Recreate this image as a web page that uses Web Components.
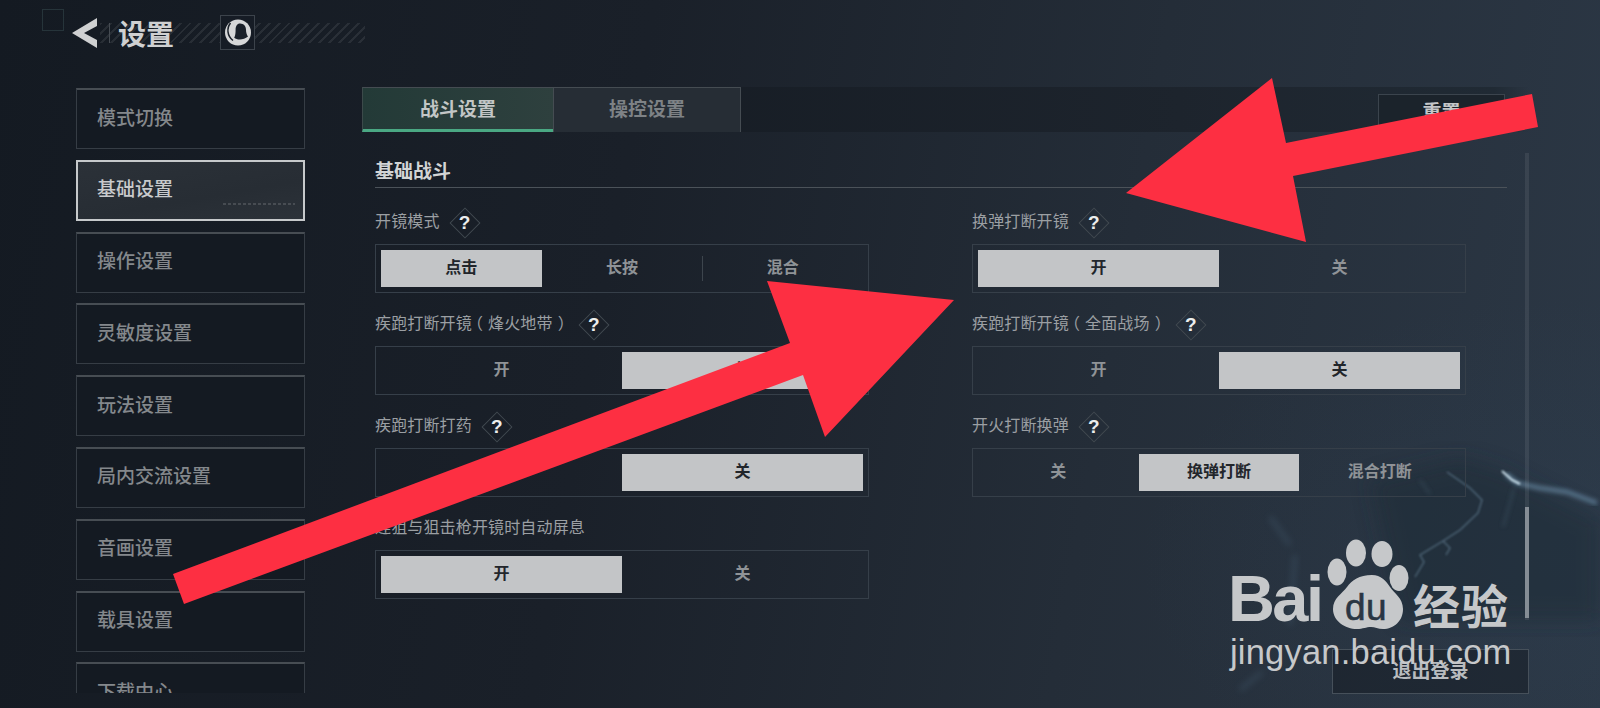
<!DOCTYPE html>
<html lang="zh">
<head>
<meta charset="utf-8">
<title>设置</title>
<style>
    html, body { margin: 0; padding: 0; background: #161c25; }
</style>
</head>
<body>
<settings-page></settings-page>
<script>
class PageHeader extends HTMLElement {
    constructor() {
        super();
        this.attachShadow({ mode: 'open' }).innerHTML = `
        <style>
            :host { display: flex; align-items: flex-start; height: 87px; padding-left: 42px; box-sizing: border-box; position: relative; }
            .hatch { position: absolute; left: 100px; top: 23px; width: 265px; height: 20px;
                background: repeating-linear-gradient(135deg, rgba(255,255,255,.08) 0 2px, transparent 2px 7px); }
            .corner { width: 22px; height: 22px; margin-top: 9px; box-sizing: border-box; border: 1px solid #26343a; }
            .back { margin: 18px 0 0 8px; position: relative; }
            .sep { width: 1px; height: 20px; margin: 23px 0 0 12px; background: #454b52; position: relative; }
            h1 { margin: 12px 0 0 8px; font: 700 28px/42px "Noto Sans CJK SC", sans-serif; color: #cfd0d1; position: relative; }
            .avatar { width: 35px; height: 35px; margin: 15px 0 0 46px; box-sizing: border-box; border: 1px solid #3c434b; background: #161c25; position: relative; }
            svg { display: block; }
        </style>
        <div class="hatch"></div>
        <div class="corner"></div>
        <svg class="back" width="25" height="30" viewBox="0 0 25 30"><path d="M25 0 L0 15 L25 30 L25 22 L12 15 L25 8Z" fill="#cfd0d1"/></svg>
        <div class="sep"></div>
        <h1>设置</h1>
        <div class="avatar">
            <svg width="33" height="33" viewBox="0 0 33 33">
                <circle cx="17" cy="16.5" r="13" fill="#d6d7d8"/>
                <path d="M19 7.500c3.800 0 6 2.800 6 6.200 0 3 .8 5 2 6.800-2.400 2-5.400 3-8.200 3-2.400 0-4.200-.6-5.600-1.800 1.200-2.400 1.400-5 1.400-8 0-3.600 1.600-6.200 4.400-6.200z" fill="#1a2029"/>
                <path d="M9.500 7c-4 5-3.500 13 2.500 17.500" fill="none" stroke="#1a2029" stroke-width="1.500"/>
            </svg>
        </div>`;
    }
}

class NavItem extends HTMLElement {
    constructor() {
        super();
        this.attachShadow({ mode: 'open' }).innerHTML = `
        <style>
            :host { display: flex; align-items: center; flex: none; height: 61px; box-sizing: border-box; padding: 0 0 6px 20px; position: relative;
                border: 1px solid #363d45; border-top: 2px solid #474d53; background: #141a22;
                font: 500 19px "Noto Sans CJK SC", sans-serif; color: #84888c; }
            :host([active]) { border: 2px solid #c6c9cb; color: #c8cacc; padding-left: 19px;
                background: linear-gradient(170deg, #2b3138, #272d34 60%, #2c3239); }
            :host([active])::after { content: ''; position: absolute; right: 8px; bottom: 14px; width: 72px; height: 2px;
                background: repeating-linear-gradient(90deg, rgba(255,255,255,.14) 0 3px, transparent 3px 5px); }
        </style>
        <slot></slot>`;
    }
}

class SideNav extends HTMLElement {
    constructor() {
        super();
        this.attachShadow({ mode: 'open' }).innerHTML = `
        <style>
            :host { display: flex; flex-direction: column; gap: 10.8px; flex: none; width: 229px; height: 606px; padding-top: 1px; box-sizing: border-box; overflow: hidden; }
        </style>
        <slot></slot>`;
    }
}

class HelpBadge extends HTMLElement {
    constructor() {
        super();
        this.attachShadow({ mode: 'open' }).innerHTML = `
        <style>
            :host { display: inline-flex; align-items: center; justify-content: center; position: relative; width: 30px; height: 30px; margin-left: 10px;
                font: 700 19px "Liberation Sans", sans-serif; color: #eceded; }
            i { position: absolute; inset: 4px; border: 1px solid #414950; transform: rotate(45deg); }
            span { position: relative; }
        </style>
        <i></i><span>?</span>`;
    }
}

class SegControl extends HTMLElement {
    connectedCallback() {
        let options = this.getAttribute('options').split('|');
        let selected = Number(this.getAttribute('selected'));
        let sep = this.getAttribute('sep');
        this.attachShadow({ mode: 'open' }).innerHTML = `
        <style>
            :host { display: flex; height: 49px; box-sizing: border-box; padding: 5px; border: 1px solid #363f49;
                font: 700 16px "Noto Sans CJK SC", sans-serif; color: #8f9397; }
            div { flex: 1; display: flex; align-items: center; justify-content: center; position: relative; padding-bottom: 6px; }
            .on { background: #c3c5c7; color: #22262b; }
            .sep::before { content: ''; position: absolute; left: 0; top: 6px; bottom: 6px; width: 1px; background: #3d454d; }
        </style>
        ${options.map((text, i) => `<div class="${i === selected ? 'on' : ''} ${String(i) === sep ? 'sep' : ''}">${text}</div>`).join('')}`;
    }
}

class SettingRow extends HTMLElement {
    connectedCallback() {
        let label = this.getAttribute('label')
            .replace('（', '<b class="open">（</b>')
            .replace('）', '<b class="close">）</b>');
        this.attachShadow({ mode: 'open' }).innerHTML = `
        <style>
            :host { display: flex; flex-direction: column; gap: 3px; }
            .label { display: flex; align-items: center; height: 36px; font: 400 16px "Noto Sans CJK SC", sans-serif; color: #9b9fa3; }
            .text { margin-bottom: 6px; letter-spacing: .15px; }
            b { font-weight: 400; font-feature-settings: "halt"; display: inline-block; }
            .open { margin: 0 5px 0 3px; }
            .close { margin: 0 3px 0 5px; }
        </style>
        <div class="label"><span class="text">${label}</span><help-badge style="${this.hasAttribute('nohelp') ? 'display:none' : ''}"></help-badge></div>
        <seg-control options="${this.getAttribute('options')}" selected="${this.getAttribute('selected')}" sep="${this.getAttribute('sep') || ''}"></seg-control>`;
    }
}

class SettingTabs extends HTMLElement {
    constructor() {
        super();
        this.attachShadow({ mode: 'open' }).innerHTML = `
        <style>
            :host { display: flex; height: 45px; font: 700 19px "Noto Sans CJK SC", sans-serif;
                background: linear-gradient(90deg, #161c24 20%, #1d242d 70%, #202a34 97%, transparent); }
            .tab { width: 191px; display: flex; align-items: center; justify-content: center; box-sizing: border-box; border-top: 1px solid #454c52; padding-bottom: 6px; }
            .on { background: linear-gradient(90deg, #233a37, #2e403e); color: #c2c6c6; border-bottom: 3px solid #4aa883; padding-bottom: 3px; border-left: 1px solid #3c4a4a; }
            .off { width: 188px; background: #262d35; color: #7e8286; border-right: 1px solid #454c52; border-left: 1px solid #454c52; }
            .reset { margin: 7px 24px 0 auto; width: 127px; height: 38px; display: flex; align-items: center; justify-content: center; box-sizing: border-box; padding-bottom: 6px;
                background: #1b232b; border: 1px solid #3b444d; color: #c4c6c8; }
        </style>
        <div class="tab on">战斗设置</div>
        <div class="tab off">操控设置</div>
        <div class="reset">重置</div>`;
    }
}

class ScrollTrack extends HTMLElement {
    constructor() {
        super();
        this.attachShadow({ mode: 'open' }).innerHTML = `
        <style>
            :host { display: block; flex: none; width: 4px; height: 467px; margin-top: 21px; padding-top: 354px; box-sizing: border-box; background: rgba(255,255,255,.08); }
            div { height: 111px; background: #858d95; }
        </style>
        <div></div>`;
    }
}

class SettingsPanel extends HTMLElement {
    constructor() {
        super();
        this.attachShadow({ mode: 'open' }).innerHTML = `
        <style>
            :host { display: flex; gap: 18px; height: 517px; padding-left: 13px; box-sizing: border-box; }
            .inner { flex: none; width: 1132px; }
            h2 { margin: 26px 0 17px; height: 29px; border-bottom: 1px solid #4b5259; font: 700 19px/24px "Noto Sans CJK SC", sans-serif; color: #d2d4d5; box-sizing: content-box; }
            .grid { display: grid; grid-template-columns: 494px 494px; column-gap: 103px; row-gap: 14px; }
        </style>
        <div class="inner">
            <h2>基础战斗</h2>
            <div class="grid">
                <setting-row label="开镜模式" options="点击|长按|混合" selected="0" sep="2"></setting-row>
                <setting-row label="换弹打断开镜" options="开|关" selected="0"></setting-row>
                <setting-row label="疾跑打断开镜（烽火地带）" options="开|关" selected="1"></setting-row>
                <setting-row label="疾跑打断开镜（全面战场）" options="开|关" selected="1"></setting-row>
                <setting-row label="疾跑打断打药" options="开|关" selected="1"></setting-row>
                <setting-row label="开火打断换弹" options="关|换弹打断|混合打断" selected="1"></setting-row>
                <setting-row label="连狙与狙击枪开镜时自动屏息" nohelp options="开|关" selected="0"></setting-row>
            </div>
        </div>
        <scroll-track></scroll-track>`;
    }
}

class LogoutButton extends HTMLElement {
    constructor() {
        super();
        this.attachShadow({ mode: 'open' }).innerHTML = `
        <style>
            :host { display: flex; align-items: center; justify-content: center; width: 197px; height: 45px; margin-left: auto; box-sizing: border-box; padding-bottom: 4px;
                background: rgba(20,26,33,.5); border: 1px solid #46505a; font: 700 19px "Noto Sans CJK SC", sans-serif; color: #b9bcbf; }
        </style>
        退出登录`;
    }
}

class StormBackdrop extends HTMLElement {
    constructor() {
        super();
        this.attachShadow({ mode: 'open' }).innerHTML = `
        <style>
            :host { position: absolute; inset: 0; display: block; }
            svg { position: absolute; left: 0; top: 0; }
        </style>
        <svg width="1600" height="708" viewBox="0 0 1600 708" fill="none">
            <defs>
                <filter id="b8"><feGaussianBlur stdDeviation="10"/></filter>
                <filter id="b3"><feGaussianBlur stdDeviation="3"/></filter>
                <filter id="b2"><feGaussianBlur stdDeviation="2"/></filter>
                <filter id="b1"><feGaussianBlur stdDeviation=".8"/></filter>
            </defs>
            <path d="M1370 480 L1460 458 L1500 470 L1560 500 L1600 520 L1600 620 L1400 620Z" fill="#1f2a35" opacity=".5" filter="url(#b8)"/>
            <path d="M1270 517L1290 545M1295 555L1290 625M1240 690L1262 672" stroke="#4a6378" stroke-width="5" opacity=".3" filter="url(#b3)"/>
            <path d="M1506 474L1517 483L1540 488L1567 492L1597 503" stroke="#6f93ad" stroke-width="5" opacity=".6" filter="url(#b2)"/>
            <path d="M1502 471L1512 480L1520 484" stroke="#cfe4ef" stroke-width="2" filter="url(#b1)"/>
            <path d="M1447 472L1470 488L1482 500L1478 513L1460 530L1443 541L1420 555L1424 562L1415 577M1443 541L1450 548L1446 555" stroke="#5f7a8e" stroke-width="1.300" opacity=".8" filter="url(#b1)"/>
            <path d="M1514 488L1510 503L1503 527M1420 480L1430 494" stroke="#3f5464" stroke-width="2" opacity=".6" filter="url(#b2)"/>
        </svg>`;
    }
}

class BaiduMark extends HTMLElement {
    constructor() {
        super();
        this.attachShadow({ mode: 'open' }).innerHTML = `
        <style>
            :host { position: absolute; left: 1228px; top: 535px; width: 290px; height: 145px; display: block; color: #c6c8ca; }
            span { position: absolute; white-space: nowrap; }
            .bai { left: 0; top: 36px; font: 700 65px/56px "Liberation Sans", sans-serif; letter-spacing: -2.600px; }
            .jy { left: 185px; top: 44px; font: 700 47px/50px "Noto Sans CJK SC", sans-serif; letter-spacing: 1px; }
            .url { left: 2px; top: 99px; font: 400 34.500px/36px "Liberation Sans", sans-serif; letter-spacing: .2px; }
            .du { left: 117px; top: 58px; font: 400 37px/30px "Liberation Sans", sans-serif; color: #2a3643; -webkit-text-stroke: .6px #2a3643; letter-spacing: .5px; }
            svg { position: absolute; left: 0; top: 0; }
        </style>
        <svg width="290" height="100" viewBox="1228 535 290 100">
            <g fill="#c6c8ca">
                <ellipse cx="1356" cy="553" rx="10" ry="13.500"/>
                <ellipse cx="1382" cy="554" rx="10.500" ry="13"/>
                <ellipse cx="1337" cy="572" rx="9.500" ry="13.500"/>
                <ellipse cx="1399" cy="578" rx="9.500" ry="13"/>
                <path d="M1372 575c9 0 14 6 18 12 4 6 13 11 13 22 0 12-9 20-20 20-5 0-8-2-12-2-5 0-8 2-14 2-12 0-24-8-24-20 0-11 9-15 14-22 5-7 12-12 25-12z"/>
            </g>
        </svg>
        <span class="bai">Bai</span>
        <span class="du">du</span>
        <span class="jy">经验</span>
        <span class="url">jingyan.baidu.com</span>`;
    }
}

class AnnotationArrows extends HTMLElement {
    constructor() {
        super();
        this.attachShadow({ mode: 'open' }).innerHTML = `
        <style>
            :host { position: absolute; inset: 0; display: block; pointer-events: none; }
            svg { position: absolute; left: 0; top: 0; }
        </style>
        <svg width="1600" height="708" viewBox="0 0 1600 708">
            <g fill="#fd2f42">
                <polygon points="1126,193 1272,78 1286,143 1532,94 1538,127 1293,176 1306,242"/>
                <polygon points="954,300 767,281 790,343 173,574 184,604 803,375 825,437"/>
            </g>
        </svg>`;
    }
}

class SettingsPage extends HTMLElement {
    constructor() {
        super();
        this.attachShadow({ mode: 'open' }).innerHTML = `
        <style>
            :host { display: block; position: relative; width: 1600px; height: 708px; overflow: hidden;
                background:
                    radial-gradient(420px 260px at 1560px 560px, rgba(46,66,86,.3), transparent),
                    linear-gradient(100deg, #141a22 0%, #1a2029 38%, #242d38 68%, #2c3846 100%); }
            .body { display: flex; gap: 57px; padding-left: 76px; position: relative; }
            .top { position: relative; }
            .content { flex: none; width: 1167px; }
        </style>
        <storm-backdrop></storm-backdrop>
        <page-header class="top"></page-header>
        <div class="body">
            <side-nav>
                <nav-item>模式切换</nav-item>
                <nav-item active>基础设置</nav-item>
                <nav-item>操作设置</nav-item>
                <nav-item>灵敏度设置</nav-item>
                <nav-item>玩法设置</nav-item>
                <nav-item>局内交流设置</nav-item>
                <nav-item>音画设置</nav-item>
                <nav-item>载具设置</nav-item>
                <nav-item>下载中心</nav-item>
            </side-nav>
            <div class="content">
                <setting-tabs></setting-tabs>
                <settings-panel></settings-panel>
                <logout-button></logout-button>
            </div>
        </div>
        <baidu-mark></baidu-mark>
        <annotation-arrows></annotation-arrows>`;
    }
}

customElements.define('page-header', PageHeader);
customElements.define('nav-item', NavItem);
customElements.define('side-nav', SideNav);
customElements.define('help-badge', HelpBadge);
customElements.define('seg-control', SegControl);
customElements.define('setting-row', SettingRow);
customElements.define('setting-tabs', SettingTabs);
customElements.define('scroll-track', ScrollTrack);
customElements.define('settings-panel', SettingsPanel);
customElements.define('logout-button', LogoutButton);
customElements.define('storm-backdrop', StormBackdrop);
customElements.define('baidu-mark', BaiduMark);
customElements.define('annotation-arrows', AnnotationArrows);
customElements.define('settings-page', SettingsPage);
</script>
</body>
</html>
